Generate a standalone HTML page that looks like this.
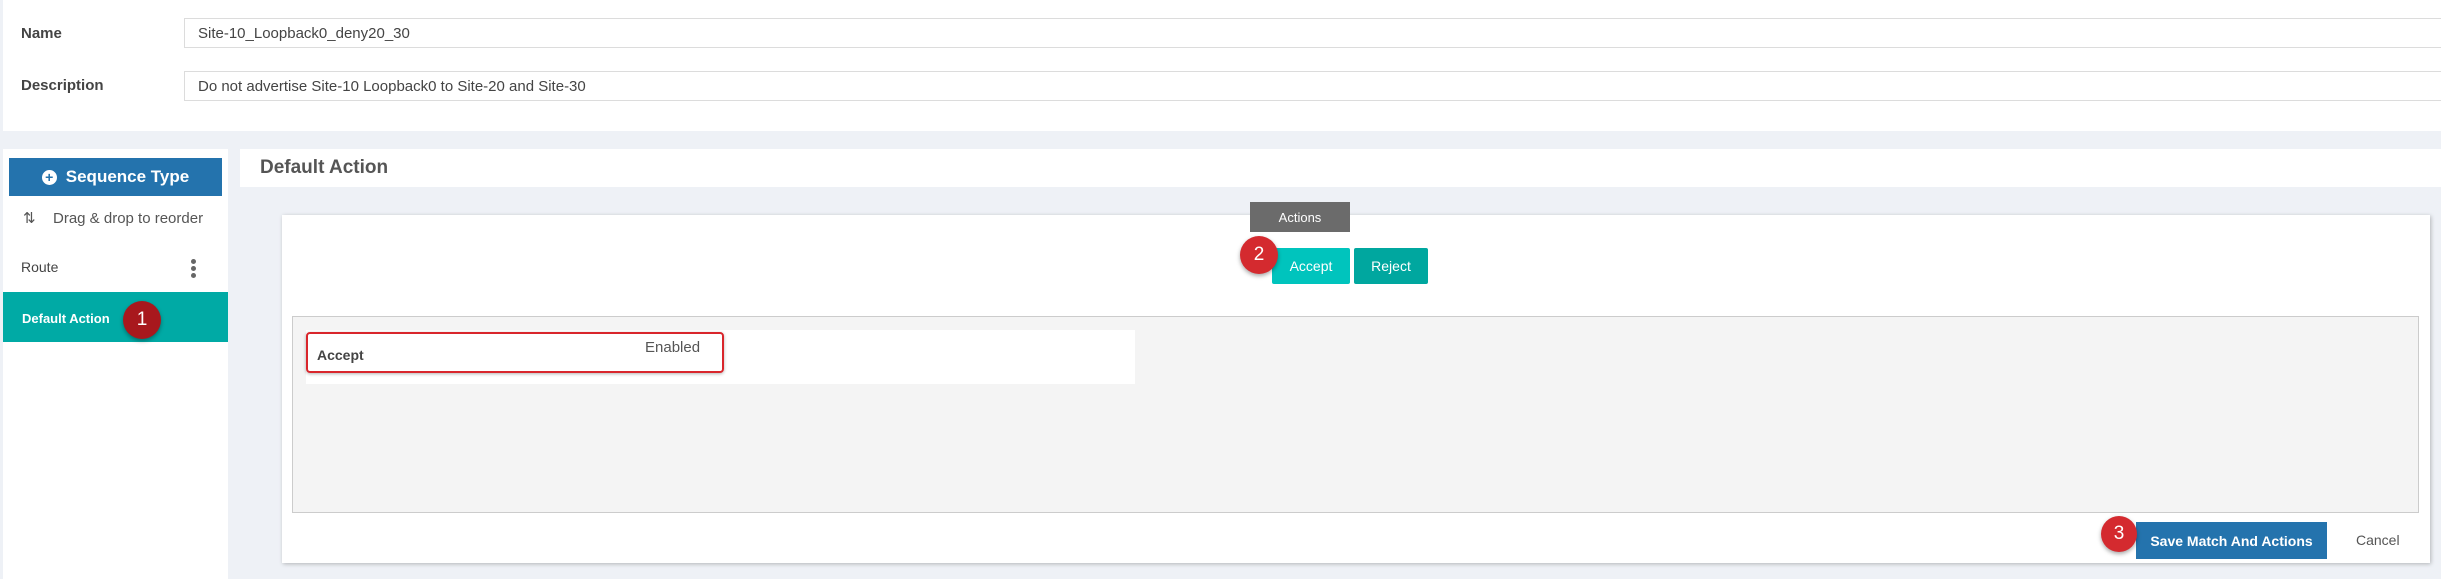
<!DOCTYPE html>
<html><head><meta charset="utf-8"><style>
*{box-sizing:border-box;margin:0;padding:0}
body{width:2441px;height:574px;background:#eef1f6;font-family:"Liberation Sans",Arial,sans-serif;color:#333;position:relative;overflow:hidden}
.abs{position:absolute}
.lbl{font-size:15px;font-weight:bold;color:#444}
.inp{border:1px solid #dcdcdc;background:#fff;font-size:15px;color:#444;padding-left:13px;display:flex;align-items:center}
.badge{position:absolute;border-radius:50%;background:#d42a2f;color:#fff;font-size:19px;display:flex;align-items:center;justify-content:center;box-shadow:0 2px 4px rgba(0,0,0,.35)}
</style></head><body>
<div class="abs" style="left:3px;top:0;width:2438px;height:131px;background:#fff"></div>
<div class="abs lbl" style="left:21px;top:25px">Name</div>
<div class="abs inp" style="left:184px;top:18px;width:2270px;height:30px">Site-10_Loopback0_deny20_30</div>
<div class="abs lbl" style="left:21px;top:77px">Description</div>
<div class="abs inp" style="left:184px;top:71px;width:2270px;height:30px">Do not advertise Site-10 Loopback0 to Site-20 and Site-30</div>

<div class="abs" style="left:3px;top:149px;width:225px;height:430px;background:#fff"></div>
<div class="abs" style="left:9px;top:158px;width:213px;height:38px;background:#2473ad;color:#fff;font-size:17px;font-weight:bold;display:flex;align-items:center;justify-content:center">
<span style="display:inline-block;width:15px;height:15px;border-radius:50%;background:#fff;color:#2473ad;font-size:14px;line-height:15px;text-align:center;margin-right:9px">+</span>Sequence Type</div>
<div class="abs" style="left:23px;top:209px;font-size:15px;color:#555">⇅</div>
<div class="abs" style="left:53px;top:210px;font-size:15px;color:#555">Drag &amp; drop to reorder</div>
<div class="abs" style="left:21px;top:259px;font-size:14px;color:#444">Route</div>
<div class="abs" style="left:191px;top:259px;width:6px">
<div style="width:5px;height:5px;border-radius:50%;background:#666;margin-bottom:2px"></div><div style="width:5px;height:5px;border-radius:50%;background:#666;margin-bottom:2px"></div><div style="width:5px;height:5px;border-radius:50%;background:#666"></div></div>
<div class="abs" style="left:3px;top:292px;width:225px;height:50px;background:#00aaa5"></div>
<div class="abs" style="left:22px;top:311px;font-size:13px;font-weight:bold;color:#fff">Default Action</div>
<div class="badge" style="left:123px;top:301px;width:38px;height:38px;background:#a8181d">1</div>

<div class="abs" style="left:240px;top:149px;width:2201px;height:38px;background:#fff"></div>
<div class="abs" style="left:260px;top:157px;font-size:19px;font-weight:bold;color:#555">Default Action</div>

<div class="abs" style="left:282px;top:215px;width:2148px;height:348px;background:#fff;box-shadow:1px 1px 4px rgba(0,0,0,.25)"></div>
<div class="abs" style="left:1250px;top:202px;width:100px;height:30px;background:#6b6b6b;color:#fff;font-size:13px;display:flex;align-items:center;justify-content:center">Actions</div>
<div class="abs" style="left:1272px;top:248px;width:78px;height:36px;background:#00c4bd;color:#fff;font-size:14px;border-radius:2px;display:flex;align-items:center;justify-content:center">Accept</div>
<div class="abs" style="left:1354px;top:248px;width:74px;height:36px;background:#00a79f;color:#fff;font-size:14px;border-radius:2px;display:flex;align-items:center;justify-content:center">Reject</div>
<div class="badge" style="left:1240px;top:236px;width:38px;height:38px">2</div>

<div class="abs" style="left:292px;top:316px;width:2127px;height:197px;background:#f4f4f4;border:1px solid #ccc"></div>
<div class="abs" style="left:306px;top:330px;width:829px;height:54px;background:#fff"></div>
<div class="abs" style="left:306px;top:332px;width:418px;height:41px;border:2px solid #d9262c;border-radius:4px;box-shadow:0 1px 3px rgba(0,0,0,.3)"></div>
<div class="abs" style="left:317px;top:347px;font-size:14px;font-weight:bold;color:#444">Accept</div>
<div class="abs" style="left:645px;top:339px;font-size:15px;color:#555">Enabled</div>

<div class="abs" style="left:2136px;top:522px;width:191px;height:37px;background:#2473ad;color:#fff;font-size:14px;font-weight:bold;display:flex;align-items:center;justify-content:center">Save Match And Actions</div>
<div class="badge" style="left:2101px;top:516px;width:36px;height:36px">3</div>
<div class="abs" style="left:2356px;top:532px;font-size:14px;color:#555">Cancel</div>
</body></html>
